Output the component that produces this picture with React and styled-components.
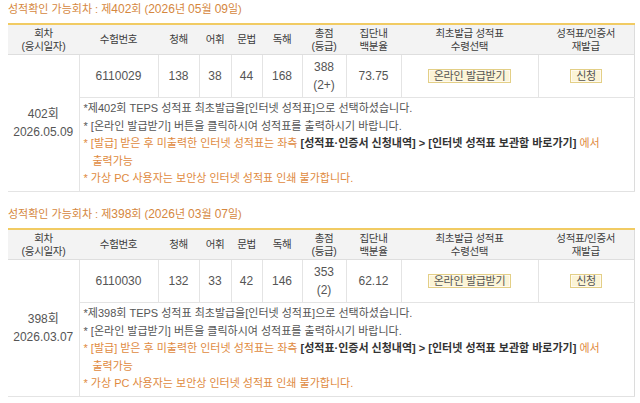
import React from "react";
import styled, { createGlobalStyle } from "styled-components";

const GlobalStyle = createGlobalStyle`
  body {
    margin: 0;
    background: #fff;
    font-family: "Liberation Sans", "Noto Sans CJK KR", sans-serif;
    font-size: 11px;
    color: #555;
  }
`;

const Page = styled.div`
  padding: 1px 6px 0 8px;
`;

const Section = styled.section`
  margin-bottom: 14px;
`;

const SectionTitle = styled.h2`
  margin: 0 0 6px;
  font-size: 11px;
  font-weight: normal;
  line-height: 16px;
  color: #d5873e;
`;

const Num = styled.span`
  font-size: 12px;
`;

const ScoreTable = styled.table`
  width: 626px;
  border-collapse: collapse;
  table-layout: fixed;
  border-top: 2px solid #f1cb63;
  border-bottom: 1px solid #e2e2e2;
  border-right: 1px solid #dcdcdc;
`;

const HeadCell = styled.th`
  height: 29px;
  padding: 0;
  background: #f3f3f3;
  border-bottom: 1px solid #dedede;
  font-size: 10.5px;
  font-weight: normal;
  letter-spacing: -0.3px;
  line-height: 13px;
  color: #3c3c3c;
  text-align: center;
`;

const Cell = styled.td`
  height: 42px;
  padding: 0;
  border-left: ${(p) => (p.$first ? "none" : "1px solid #e4e4e4")};
  border-bottom: 1px solid #e4e4e4;
  font-size: 12px;
  line-height: 18px;
  text-align: center;
  vertical-align: middle;
`;

const NoteCell = styled.td`
  height: 91px;
  padding: 2px 4px 0 4px;
  border-left: 1px solid #e4e4e4;
  vertical-align: top;
  text-align: left;
  line-height: 17.5px;
`;

const Note = styled.div`
  color: ${(p) => (p.$warn ? "#e08a3e" : "#555")};
  padding-left: ${(p) => (p.$indent ? "9px" : "0")};
`;

const Strong = styled.b`
  color: #333;
`;

const IssueButton = styled.button`
  font-family: inherit;
  font-size: 11px;
  letter-spacing: -0.3px;
  line-height: 12px;
  padding: 0 5px;
  color: #555;
  background: #fbf4d6;
  border: 1px solid #e3cf86;
  box-shadow: inset 0 0 0 1px #fffaf0;
  border-radius: 0;
  cursor: pointer;
`;

const COLS = [71, 79, 41, 32, 31, 40, 44, 55, 137, 96];

const ROUNDS = [
  {
    no: 402,
    date: "2026.05.09",
    y: "2026",
    m: "05",
    d: "09",
    id: "6110029",
    listening: 138,
    vocab: 38,
    grammar: 44,
    reading: 168,
    total: 388,
    grade: "2+",
    pct: "73.75",
  },
  {
    no: 398,
    date: "2026.03.07",
    y: "2026",
    m: "03",
    d: "07",
    id: "6110030",
    listening: 132,
    vocab: 33,
    grammar: 42,
    reading: 146,
    total: 353,
    grade: "2",
    pct: "62.12",
  },
];

function RoundTable({ r }) {
  return (
    <Section>
      <SectionTitle>
        성적확인 가능회차 : 제<Num>{r.no}</Num>회 (<Num>{r.y}</Num>년 <Num>{r.m}</Num>월{" "}
        <Num>{r.d}</Num>일)
      </SectionTitle>
      <ScoreTable>
        <colgroup>
          {COLS.map((w, i) => (
            <col key={i} style={{ width: w }} />
          ))}
        </colgroup>
        <thead>
          <tr>
            <HeadCell>
              회차
              <br />
              (응시일자)
            </HeadCell>
            <HeadCell>수험번호</HeadCell>
            <HeadCell>청해</HeadCell>
            <HeadCell>어휘</HeadCell>
            <HeadCell>문법</HeadCell>
            <HeadCell>독해</HeadCell>
            <HeadCell>
              총점
              <br />
              (등급)
            </HeadCell>
            <HeadCell>
              집단내
              <br />
              백분율
            </HeadCell>
            <HeadCell>
              최초발급 성적표
              <br />
              수령선택
            </HeadCell>
            <HeadCell>
              성적표/인증서
              <br />
              재발급
            </HeadCell>
          </tr>
        </thead>
        <tbody>
          <tr>
            <Cell $first rowSpan={2}>
              {r.no}회
              <br />
              {r.date}
            </Cell>
            <Cell>{r.id}</Cell>
            <Cell>{r.listening}</Cell>
            <Cell>{r.vocab}</Cell>
            <Cell>{r.grammar}</Cell>
            <Cell>{r.reading}</Cell>
            <Cell>
              {r.total}
              <br />({r.grade})
            </Cell>
            <Cell>{r.pct}</Cell>
            <Cell>
              <IssueButton>온라인 발급받기</IssueButton>
            </Cell>
            <Cell>
              <IssueButton>신청</IssueButton>
            </Cell>
          </tr>
          <tr>
            <NoteCell colSpan={9}>
              <Note>
                *제{r.no}회 TEPS 성적표 최초발급을[인터넷 성적표]으로 선택하셨습니다.
              </Note>
              <Note>* [온라인 발급받기] 버튼을 클릭하시여 성적표를 출력하시기 바랍니다.</Note>
              <Note $warn>
                * [발급] 받은 후 미출력한 인터넷 성적표는 좌측{" "}
                <Strong>[성적표·인증서 신청내역] &gt; [인터넷 성적표 보관함 바로가기]</Strong> 에서
              </Note>
              <Note $warn $indent>
                출력가능
              </Note>
              <Note $warn>* 가상 PC 사용자는 보안상 인터넷 성적표 인쇄 불가합니다.</Note>
            </NoteCell>
          </tr>
        </tbody>
      </ScoreTable>
    </Section>
  );
}

export default function App() {
  return (
    <>
      <GlobalStyle />
      <Page>
        {ROUNDS.map((r) => (
          <RoundTable key={r.no} r={r} />
        ))}
      </Page>
    </>
  );
}
